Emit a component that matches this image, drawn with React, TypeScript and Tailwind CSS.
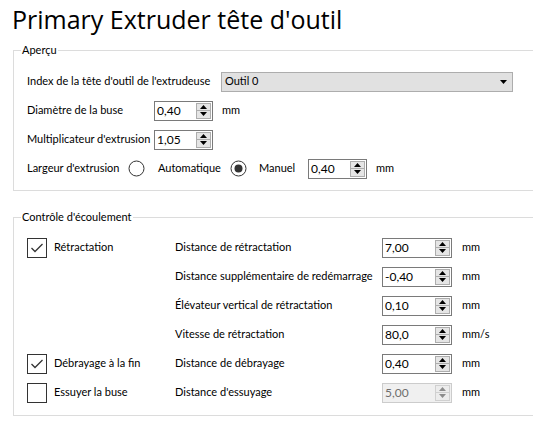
import React from "react";

function Arrow({ up, disabled }: { up?: boolean; disabled?: boolean }) {
  return (
    <svg width="7" height="4" viewBox="0 0 7 4" className="block">
      <polygon
        points={up ? "0,4 3.5,0 7,4" : "0,0 7,0 3.5,4"}
        fill={disabled ? "#8c8c8c" : "#000000"}
      />
    </svg>
  );
}

function SpinBox({
  value,
  className,
  disabled,
}: {
  value: string;
  className: string;
  disabled?: boolean;
}) {
  return (
    <div
      className={
        "flex h-[20px] shrink-0 border " +
        className +
        (disabled
          ? " border-[#cccccc] bg-[#f0f0f0] text-[#6d6d6d]"
          : " border-[#7a7a7a] bg-white text-black")
      }
    >
      <div className="flex-1 pl-[2px] text-[12px] leading-[18px]">{value}</div>
      <div className="flex w-[16px] flex-col py-[1px] pr-[1px]">
        <div
          className={
            "flex h-[8px] items-center justify-center border " +
            (disabled ? "border-[#d0d0d0] bg-[#ececec]" : "border-[#adadad] bg-[#e5e5e5]")
          }
        >
          <Arrow up disabled={disabled} />
        </div>
        <div
          className={
            "flex h-[8px] items-center justify-center border border-t-0 " +
            (disabled ? "border-[#d0d0d0] bg-[#ececec]" : "border-[#adadad] bg-[#e5e5e5]")
          }
        >
          <Arrow disabled={disabled} />
        </div>
      </div>
    </div>
  );
}

function Radio({ checked }: { checked?: boolean }) {
  return (
    <svg width="17" height="17" viewBox="0 0 17 17" className="block shrink-0">
      <circle cx="8.5" cy="8.5" r="7.5" fill="#ffffff" stroke="#333333" strokeWidth="1" />
      {checked && <circle cx="8.5" cy="8.5" r="4" fill="#333333" />}
    </svg>
  );
}

function Check({ checked }: { checked?: boolean }) {
  return (
    <div className="flex h-[20px] w-[20px] shrink-0 items-center justify-center border border-[#333333] bg-white">
      {checked && (
        <svg width="18" height="18" viewBox="0 0 18 18" className="block">
          <polyline
            points="3.5,9 7,12.5 14.5,5"
            fill="none"
            stroke="#333333"
            strokeWidth="1.3"
          />
        </svg>
      )}
    </div>
  );
}

function Group({
  title,
  children,
  className,
}: {
  title: string;
  children: React.ReactNode;
  className: string;
}) {
  return (
    <div className={"relative ml-[13px] w-[540px] border border-[#dcdcdc] pl-[13px] " + className}>
      <span className="absolute -top-[9px] left-[7px] bg-white px-[1px] leading-[16px]">
        {title}
      </span>
      {children}
    </div>
  );
}

function FlowRow({
  check,
  checked,
  left,
  label,
  value,
  unit,
  disabled,
}: {
  check?: boolean;
  checked?: boolean;
  left?: string;
  label: string;
  value: string;
  unit: string;
  disabled?: boolean;
}) {
  return (
    <div className="flex h-[29px] items-center">
      <div className="flex w-[148px] shrink-0 items-center">
        {check && <Check checked={checked} />}
        {left && <span className="ml-[7px]">{left}</span>}
      </div>
      <span className="w-[207px] shrink-0">{label}</span>
      <SpinBox value={value} className="w-[70px]" disabled={disabled} />
      <span className="ml-[10px]">{unit}</span>
    </div>
  );
}

export default function App() {
  return (
    <div className="h-[432px] w-[533px] overflow-hidden whitespace-nowrap bg-white font-['Lato','Noto_Sans',sans-serif] text-[11px] text-black">
      <div className="h-[50px] pl-[12px] pt-[3px] font-['Open_Sans','Noto_Sans',sans-serif] text-[25px] leading-[32px]">
        Primary Extruder tête d'outil
      </div>

      <Group title="Aperçu" className="pt-[16px] pb-[7px]">
        <div className="flex h-[29px] items-center">
          <span className="w-[194px] shrink-0">Index de la tête d'outil de l'extrudeuse</span>
          <div className="flex h-[20px] w-[292px] shrink-0 items-center justify-between border border-[#adadad] bg-[#e1e1e1] pl-[3px] pr-[5px]">
            <span>Outil 0</span>
            <Arrow />
          </div>
        </div>
        <div className="flex h-[29px] items-center">
          <span className="w-[127px] shrink-0">Diamètre de la buse</span>
          <SpinBox value="0,40" className="w-[59px]" />
          <span className="ml-[9px]">mm</span>
        </div>
        <div className="flex h-[29px] items-center">
          <span className="w-[127px] shrink-0">Multiplicateur d'extrusion</span>
          <SpinBox value="1,05" className="w-[59px]" />
        </div>
        <div className="flex h-[29px] items-center">
          <span className="w-[101px] shrink-0">Largeur d'extrusion</span>
          <Radio />
          <span className="ml-[13px] w-[72px] shrink-0">Automatique</span>
          <Radio checked />
          <span className="ml-[12px] w-[49px] shrink-0">Manuel</span>
          <SpinBox value="0,40" className="w-[59px]" />
          <span className="ml-[9px]">mm</span>
        </div>
      </Group>

      <Group title="Contrôle d'écoulement" className="mt-[26px] pt-[15px] pb-[8px]">
        <FlowRow check checked left="Rétractation" label="Distance de rétractation" value="7,00" unit="mm" />
        <FlowRow label="Distance supplémentaire de redémarrage" value="-0,40" unit="mm" />
        <FlowRow label="Élévateur vertical de rétractation" value="0,10" unit="mm" />
        <FlowRow label="Vitesse de rétractation" value="80,0" unit="mm/s" />
        <FlowRow check checked left="Débrayage à la fin" label="Distance de débrayage" value="0,40" unit="mm" />
        <FlowRow check left="Essuyer la buse" label="Distance d'essuyage" value="5,00" unit="mm" disabled />
      </Group>
    </div>
  );
}
